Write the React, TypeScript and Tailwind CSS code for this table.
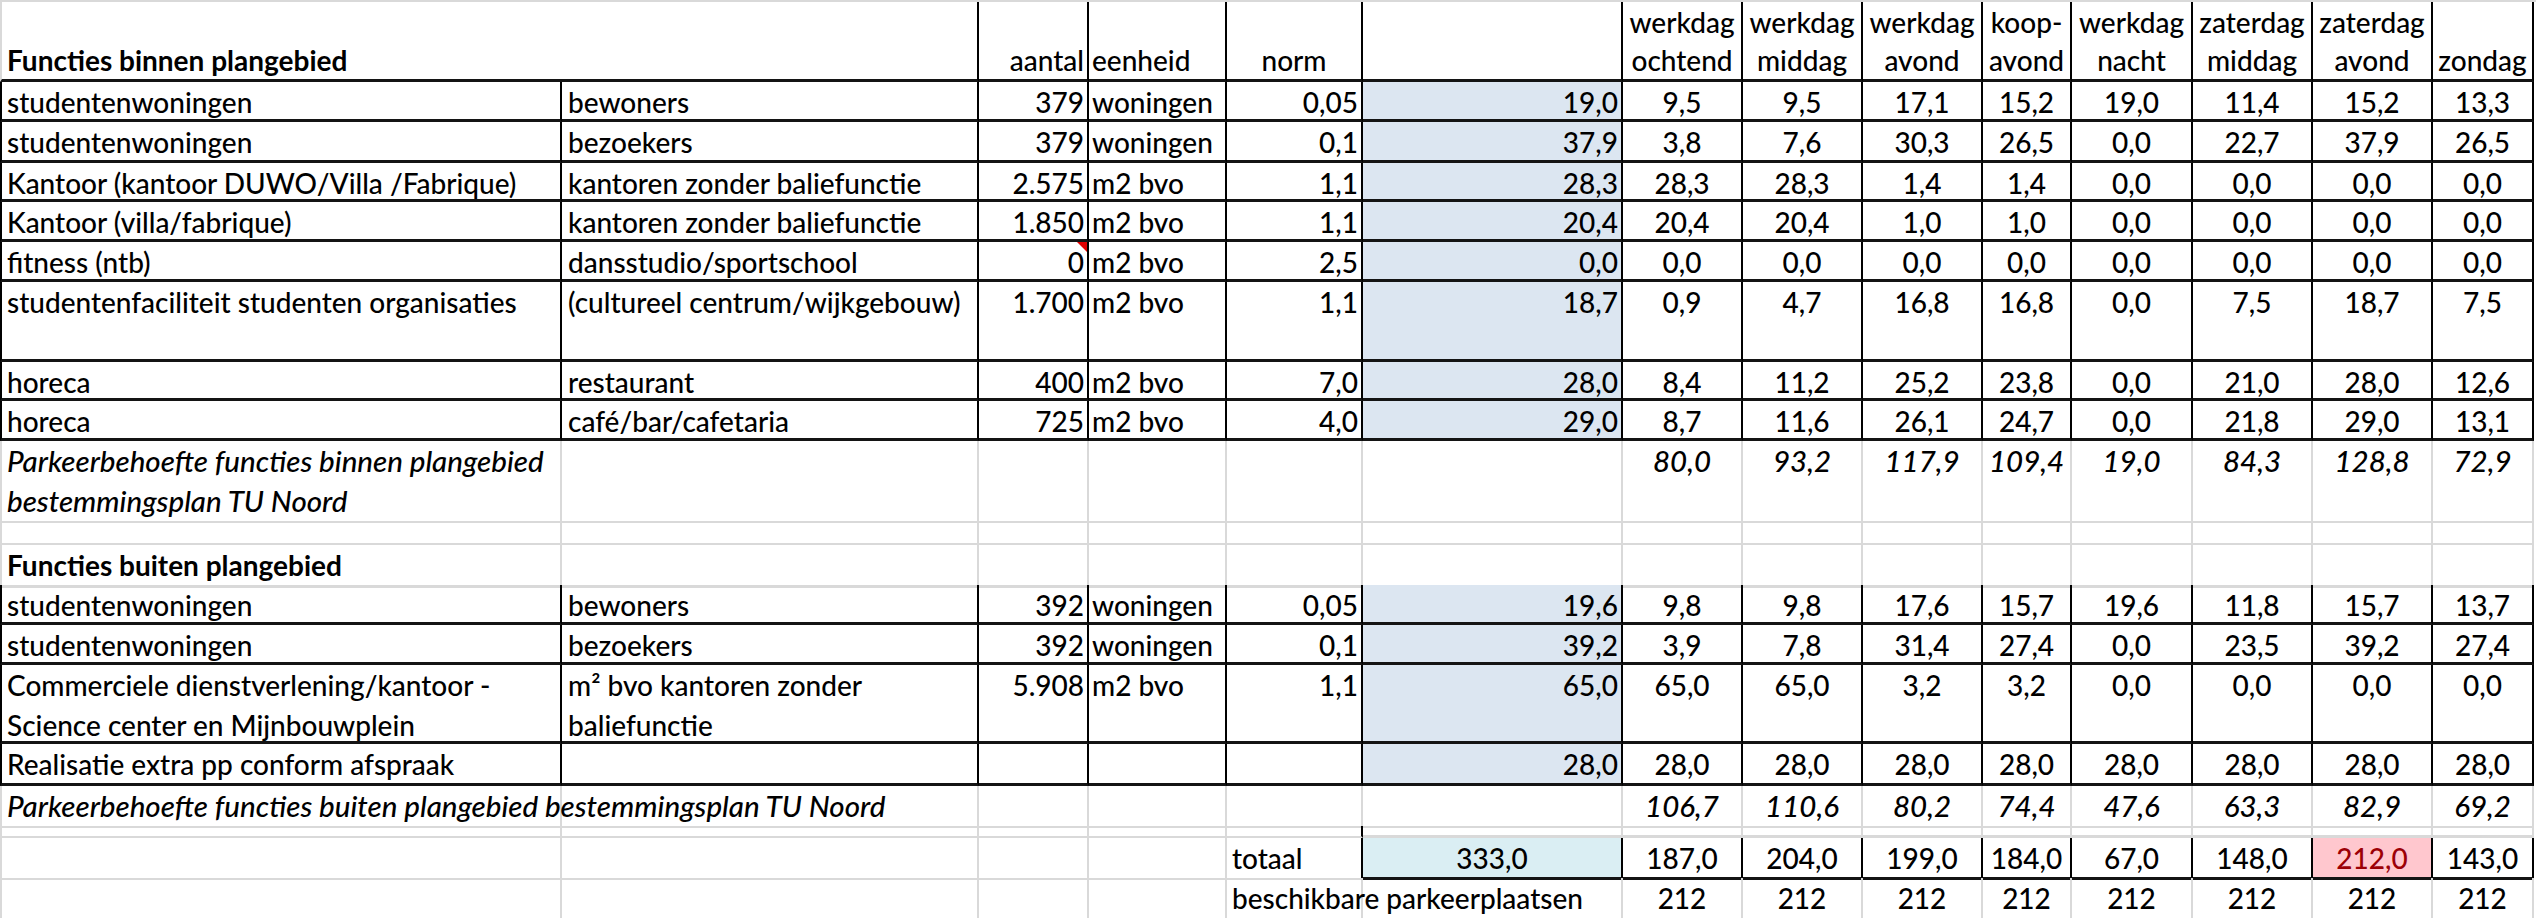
import React from "react";

const cols =
  "grid grid-cols-[562px_417px_110px_138px_136px_260px_120px_120px_120px_89px_121px_120px_120px_101px]";

// cell borders
const box = "border-r-2 border-r-black border-b-[3px] border-b-[#141414] overflow-hidden whitespace-nowrap";
const grid = "border-r-2 border-r-[#d9d9d9] border-b-2 border-b-[#d9d9d9] overflow-visible whitespace-nowrap";

type DataRow = {
  a: string[];
  b: string[];
  c: string;
  d: string;
  e: string;
  f: string;
  v: string[];
  h: string;
  flag?: boolean;
};

const binnen: DataRow[] = [
  { a: ["studentenwoningen"], b: ["bewoners"], c: "379", d: "woningen", e: "0,05", f: "19,0", v: ["9,5", "9,5", "17,1", "15,2", "19,0", "11,4", "15,2", "13,3"], h: "h-[40px]" },
  { a: ["studentenwoningen"], b: ["bezoekers"], c: "379", d: "woningen", e: "0,1", f: "37,9", v: ["3,8", "7,6", "30,3", "26,5", "0,0", "22,7", "37,9", "26,5"], h: "h-[41px]" },
  { a: ["Kantoor (kantoor DUWO/Villa /Fabrique)"], b: ["kantoren zonder baliefunctie"], c: "2.575", d: "m2 bvo", e: "1,1", f: "28,3", v: ["28,3", "28,3", "1,4", "1,4", "0,0", "0,0", "0,0", "0,0"], h: "h-[39px]" },
  { a: ["Kantoor (villa/fabrique)"], b: ["kantoren zonder baliefunctie"], c: "1.850", d: "m2 bvo", e: "1,1", f: "20,4", v: ["20,4", "20,4", "1,0", "1,0", "0,0", "0,0", "0,0", "0,0"], h: "h-[40px]" },
  { a: ["fitness (ntb)"], b: ["dansstudio/sportschool"], c: "0", d: "m2 bvo", e: "2,5", f: "0,0", v: ["0,0", "0,0", "0,0", "0,0", "0,0", "0,0", "0,0", "0,0"], h: "h-[40px]", flag: true },
  { a: ["studentenfaciliteit studenten organisaties"], b: ["(cultureel centrum/wijkgebouw)"], c: "1.700", d: "m2 bvo", e: "1,1", f: "18,7", v: ["0,9", "4,7", "16,8", "16,8", "0,0", "7,5", "18,7", "7,5"], h: "h-[80px]" },
  { a: ["horeca"], b: ["restaurant"], c: "400", d: "m2 bvo", e: "7,0", f: "28,0", v: ["8,4", "11,2", "25,2", "23,8", "0,0", "21,0", "28,0", "12,6"], h: "h-[39px]" },
  { a: ["horeca"], b: ["café/bar/cafetaria"], c: "725", d: "m2 bvo", e: "4,0", f: "29,0", v: ["8,7", "11,6", "26,1", "24,7", "0,0", "21,8", "29,0", "13,1"], h: "h-[40px]" },
];

const buiten: DataRow[] = [
  { a: ["studentenwoningen"], b: ["bewoners"], c: "392", d: "woningen", e: "0,05", f: "19,6", v: ["9,8", "9,8", "17,6", "15,7", "19,6", "11,8", "15,7", "13,7"], h: "h-[40px]" },
  { a: ["studentenwoningen"], b: ["bezoekers"], c: "392", d: "woningen", e: "0,1", f: "39,2", v: ["3,9", "7,8", "31,4", "27,4", "0,0", "23,5", "39,2", "27,4"], h: "h-[40px]" },
  { a: ["Commerciele dienstverlening/kantoor -", "Science center en Mijnbouwplein"], b: ["m² bvo kantoren zonder", "baliefunctie"], c: "5.908", d: "m2 bvo", e: "1,1", f: "65,0", v: ["65,0", "65,0", "3,2", "3,2", "0,0", "0,0", "0,0", "0,0"], h: "h-[79px]" },
  { a: ["Realisatie extra pp conform afspraak"], b: [""], c: "", d: "", e: "", f: "28,0", v: ["28,0", "28,0", "28,0", "28,0", "28,0", "28,0", "28,0", "28,0"], h: "h-[42px]" },
];

const heads = [
  ["werkdag", "ochtend"],
  ["werkdag", "middag"],
  ["werkdag", "avond"],
  ["koop-", "avond"],
  ["werkdag", "nacht"],
  ["zaterdag", "middag"],
  ["zaterdag", "avond"],
  ["zondag"],
];

function Lines({ items }: { items: string[] }) {
  return (
    <>
      {items.map((t, i) => (
        <span key={i} className="block">
          {t}
        </span>
      ))}
    </>
  );
}

function BoxRow({ row }: { row: DataRow }) {
  return (
    <div className={`${cols} ${row.h}`}>
      <div className={`${box} border-l-2 border-l-black pl-[5px]`}>
        <Lines items={row.a} />
      </div>
      <div className={`${box} pl-[6px]`}>
        <Lines items={row.b} />
      </div>
      <div className={`${box} relative text-right pr-[3px]`}>
        {row.c}
        {row.flag && (
          <span className="absolute right-0 top-0 border-t-[10px] border-l-[10px] border-t-[#e00000] border-l-transparent" />
        )}
      </div>
      <div className={`${box} pl-[3px]`}>{row.d}</div>
      <div className={`${box} text-right pr-[3px]`}>{row.e}</div>
      <div className={`${box} bg-[#dce6f1] text-right pr-[3px]`}>{row.f}</div>
      {row.v.map((x, i) => (
        <div key={i} className={`${box} text-center`}>
          {x}
        </div>
      ))}
    </div>
  );
}

function SumRow({ label, values, h }: { label: string[]; values: string[]; h: string }) {
  const wide = label.length === 1;
  return (
    <div className={`${cols} ${h} italic text-[29.5px]`}>
      <div className={`${grid} border-l-2 border-l-[#d9d9d9] pl-[5px] ${wide ? "border-r-0" : ""}`}>
        <Lines items={label} />
      </div>
      <div className={grid} />
      <div className={grid} />
      <div className={grid} />
      <div className={grid} />
      <div className={grid} />
      {values.map((x, i) => (
        <div key={i} className={`${grid} text-center`}>
          {x}
        </div>
      ))}
    </div>
  );
}

function EmptyRow({ h, blackFrom }: { h: string; blackFrom?: number }) {
  return (
    <div className={`${cols} ${h}`}>
      {Array.from({ length: 14 }).map((_, i) => (
        <div
          key={i}
          className={`${grid} ${i === 0 ? "border-l-2 border-l-[#d9d9d9]" : ""} ${
            blackFrom !== undefined && i >= blackFrom ? "border-b-[3px] border-b-[#141414]" : ""
          } ${blackFrom !== undefined && i === blackFrom - 1 ? "border-r-black" : ""}`}
        />
      ))}
    </div>
  );
}

export default function App() {
  const totals = ["187,0", "204,0", "199,0", "184,0", "67,0", "148,0", "212,0", "143,0"];
  return (
    <div className="w-[2536px] h-[918px] bg-white font-['Lato',sans-serif] font-medium text-[28px] leading-[38px] text-black overflow-hidden">
      <div className="border-t-2 border-t-[#d9d9d9]">
        {/* header */}
        <div className={`${cols} h-[80px]`}>
          <div className="flex flex-col justify-end border-l-2 border-l-[#d9d9d9] border-b-[3px] border-b-[#141414] pl-[5px] font-bold whitespace-nowrap">
            Functies binnen plangebied
          </div>
          <div className="border-r-2 border-r-black border-b-[3px] border-b-[#141414]" />
          <div className={`${box} flex flex-col justify-end items-end pr-[3px]`}>aantal</div>
          <div className={`${box} flex flex-col justify-end pl-[3px]`}>eenheid</div>
          <div className={`${box} flex flex-col justify-end items-center`}>norm</div>
          <div className={box} />
          {heads.map((hd, i) => (
            <div key={i} className={`${box} flex flex-col justify-end items-center`}>
              <Lines items={hd} />
            </div>
          ))}
        </div>

        <div className="leading-[40px]">
          {binnen.map((r, i) => (
            <BoxRow key={i} row={r} />
          ))}
          <SumRow
            h="h-[80px]"
            label={["Parkeerbehoefte functies binnen plangebied", "bestemmingsplan TU Noord"]}
            values={["80,0", "93,2", "117,9", "109,4", "19,0", "84,3", "128,8", "72,9"]}
          />
          <EmptyRow h="h-[24px]" />
          <div className={`${cols} h-[40px]`}>
            <div className={`${grid} border-l-2 border-l-[#d9d9d9] border-b-[3px] border-b-[#141414] pl-[5px] font-bold`}>
              Functies buiten plangebied
            </div>
            {Array.from({ length: 13 }).map((_, i) => (
              <div key={i} className={`${grid} border-b-[3px] border-b-[#141414]`} />
            ))}
          </div>
          {buiten.map((r, i) => (
            <BoxRow key={i} row={r} />
          ))}
          <SumRow
            h="h-[40px]"
            label={["Parkeerbehoefte functies buiten plangebied bestemmingsplan TU Noord"]}
            values={["106,7", "110,6", "80,2", "74,4", "47,6", "63,3", "82,9", "69,2"]}
          />
          <EmptyRow h="h-[12px]" blackFrom={5} />

          {/* totaal */}
          <div className={`${cols} h-[40px]`}>
            <div className={`${grid} border-l-2 border-l-[#d9d9d9]`} />
            <div className={grid} />
            <div className={grid} />
            <div className={grid} />
            <div className={`${grid} border-r-black pl-[5px]`}>totaal</div>
            <div className={`${box} bg-[#daeef3] text-center`}>333,0</div>
            {totals.map((x, i) => (
              <div
                key={i}
                className={`${box} text-center ${i === 6 ? "bg-[#ffc7ce] text-[#9c0006]" : ""}`}
              >
                {x}
              </div>
            ))}
          </div>

          {/* beschikbare parkeerplaatsen */}
          <div className={`${cols} h-[40px]`}>
            <div className={`${grid} border-l-2 border-l-[#d9d9d9]`} />
            <div className={grid} />
            <div className={grid} />
            <div className={grid} />
            <div className={`${grid} border-r-0 pl-[5px]`}>beschikbare parkeerplaatsen</div>
            <div className={grid} />
            {Array.from({ length: 8 }).map((_, i) => (
              <div key={i} className={`${grid} text-center`}>
                212
              </div>
            ))}
          </div>
        </div>
      </div>
    </div>
  );
}
